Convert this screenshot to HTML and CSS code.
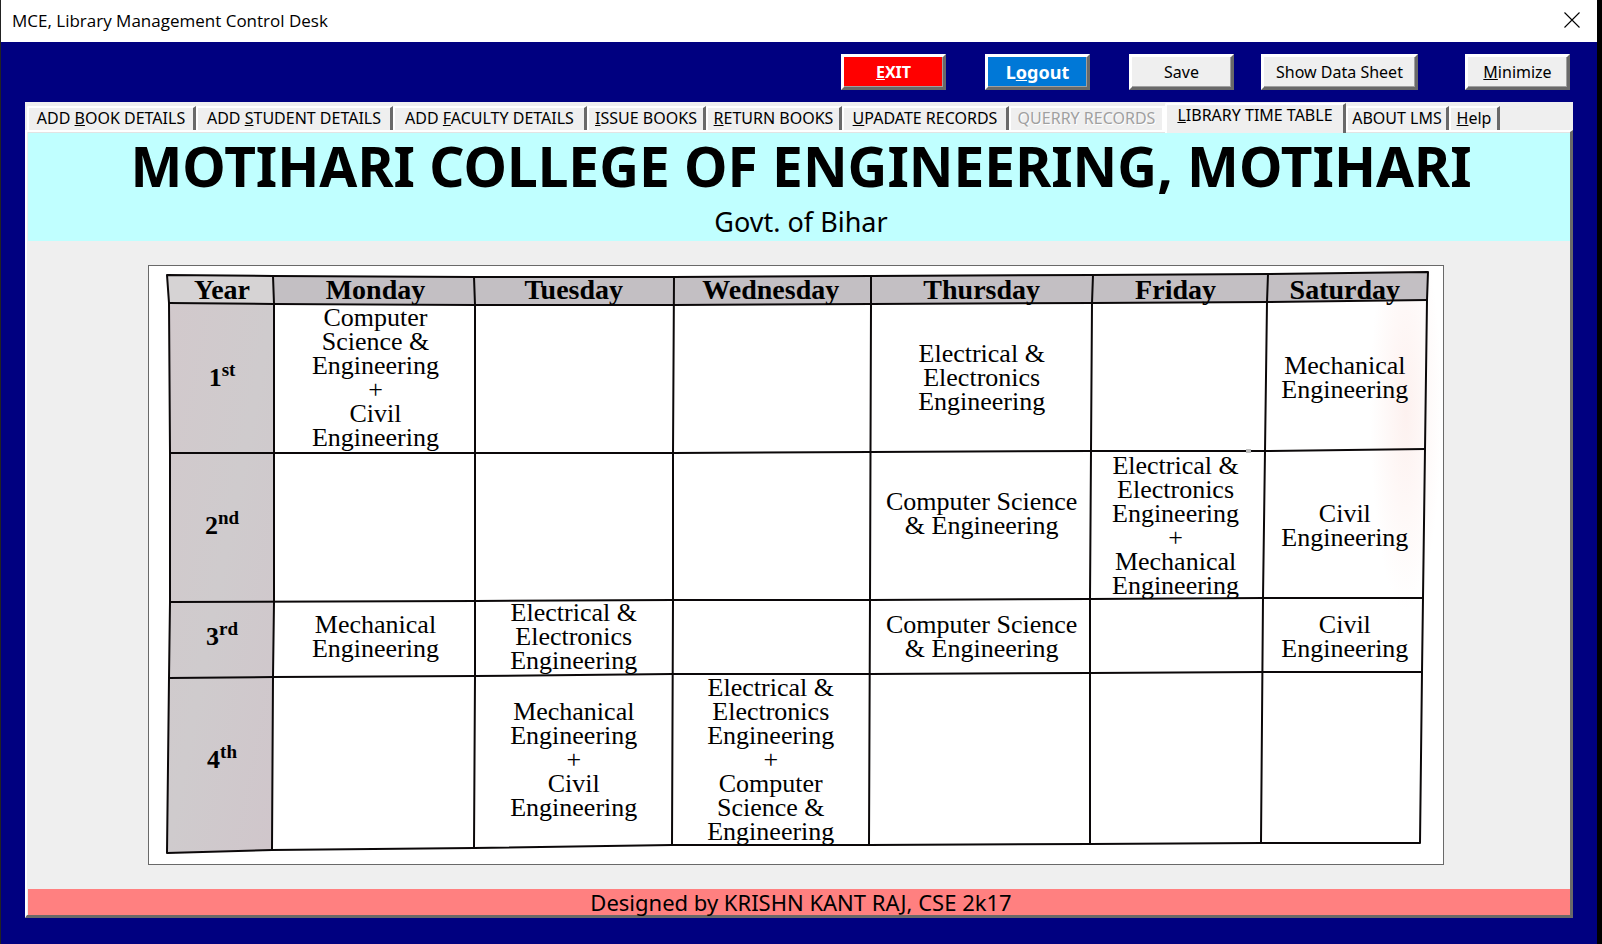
FILE: index.html
```html
<!DOCTYPE html>
<html lang="en">
<head>
<meta charset="utf-8">
<title>MCE, Library Management Control Desk</title>
<link rel="stylesheet" href="styles.css">
</head>
<body>
<div class="window">
  <header class="titlebar">
    <span class="titlebar-text">MCE, Library Management Control Desk</span>
    <button class="close" type="button" aria-label="Close">
      <svg width="16" height="16" viewBox="0 0 16 16"><path d="M0.500 0.500L15.500 15.500M15.500 0.500L0.500 15.500" stroke="#000" stroke-width="1.100" fill="none"/></svg>
    </button>
  </header>

  <main class="desk">
    <div class="toolbar">
      <button class="btn btn-exit" type="button"><u>E</u>XIT</button>
      <button class="btn btn-logout" type="button">L<u>o</u>gout</button>
      <button class="btn" type="button">Save</button>
      <button class="btn btn-wide" type="button">Show Data Sheet</button>
      <button class="btn btn-min" type="button"><u>M</u>inimize</button>
    </div>

    <div class="book">
      <div class="tabs" role="tablist">
        <button class="tab" role="tab" type="button">ADD <u>B</u>OOK DETAILS</button>
        <button class="tab" role="tab" type="button">ADD <u>S</u>TUDENT DETAILS</button>
        <button class="tab" role="tab" type="button">ADD <u>F</u>ACULTY DETAILS</button>
        <button class="tab" role="tab" type="button"><u>I</u>SSUE BOOKS</button>
        <button class="tab" role="tab" type="button"><u>R</u>ETURN BOOKS</button>
        <button class="tab" role="tab" type="button"><u>U</u>PADATE RECORDS</button>
        <button class="tab" role="tab" type="button" disabled>QUERRY RECORDS</button>
        <button class="tab tab-active" role="tab" type="button" aria-selected="true"><u>L</u>IBRARY TIME TABLE</button>
        <button class="tab" role="tab" type="button">ABOUT LMS</button>
        <button class="tab" role="tab" type="button"><u>H</u>elp</button>
      </div>

      <section class="page" role="tabpanel">
        <div class="banner">
          <h1 class="college">MOTIHARI COLLEGE OF ENGINEERING, MOTIHARI</h1>
          <p class="govt">Govt. of Bihar</p>
        </div>

        <div class="sheet-area">
          <div class="sheet">
            <svg class="ruling" viewBox="149 266 1294 598" preserveAspectRatio="none" aria-hidden="true">
              <defs>
                <linearGradient id="yearShade" x1="0" x2="1" y1="0" y2="1">
                  <stop offset="0" stop-color="#d2c9cc"/><stop offset="0.500" stop-color="#cfcbcd"/><stop offset="1" stop-color="#d0c6cb"/>
                </linearGradient>
                <radialGradient id="pinkEdge">
                  <stop offset="0" stop-color="#fdf1ef"/><stop offset="1" stop-color="#fff"/>
                </radialGradient>
              </defs>
              <ellipse cx="1406" cy="410" rx="36" ry="200" fill="url(#pinkEdge)"/>
              <path d="M167 275L474 277L673 277L871 276L1093 275L1268 274L1428 272L1427 300L1267 302L1092 303L871 304L673 305L475 304L169 303Z" fill="#c3bfc3"/>
              <path d="M167 275L273 276L274 304L169 303Z" fill="#d6d3d4"/>
              <path d="M169 303L274 304V602L273 677L272 850L167 853L169 678L170 602V453Z" fill="url(#yearShade)"/>
              <g fill="none" stroke="#0b0809" stroke-width="2" stroke-linejoin="round">
                <path d="M167 275L273 276L474 277L673 277L871 276L1093 275L1268 274L1428 272L1427 300L1425 449L1423 598L1422 672L1420 843L1261 843L1090 844L869 845L672 845L474 848L272 850L167 853L169 678L170 602L170 453L169 303Z"/>
                <path d="M169 303L274 304L475 305L673 305L871 304L1092 303L1267 302L1427 300"/>
                <path d="M170 453L475 453L673 453L870 452L1091 451L1265 451L1425 449"/>
                <path d="M170 602L475 601L673 600L870 600L1090 599L1263 598L1423 598"/>
                <path d="M169 678L274 677L475 676L672 674L870 674L1090 673L1262 672L1422 672"/>
                <path d="M273 276L274 304L274 602L273 677L272 850"/>
                <path d="M474 277L475 305V676L474 848"/>
                <path d="M674 277L673 453L673 600L672 845"/>
                <path d="M871 276L871 304L870 600L869 845"/>
                <path d="M1093 275L1092 303L1091 451L1090 599V844"/>
                <path d="M1268 274L1267 302L1265 451L1263 598L1261 843"/>
              </g>
              <path d="M1246 449h5v4h-5z" fill="#bbb"/>
            </svg>
            <table class="timetable">
              <colgroup><col class="c-year"><col class="c-mon"><col class="c-tue"><col class="c-wed"><col class="c-thu"><col class="c-fri"><col class="c-sat"></colgroup>
              <thead>
                <tr><th scope="col">Year</th><th scope="col">Monday</th><th scope="col">Tuesday</th><th scope="col">Wednesday</th><th scope="col">Thursday</th><th scope="col">Friday</th><th scope="col">Saturday</th></tr>
              </thead>
              <tbody>
                <tr class="r-first">
                  <th scope="row">1<sup>st</sup></th>
                  <td>Computer<br>Science &amp;<br>Engineering<br>+<br>Civil<br>Engineering</td>
                  <td></td><td></td>
                  <td>Electrical &amp;<br>Electronics<br>Engineering</td>
                  <td></td>
                  <td>Mechanical<br>Engineering</td>
                </tr>
                <tr class="r-second">
                  <th scope="row">2<sup>nd</sup></th>
                  <td></td><td></td><td></td>
                  <td class="raised">Computer Science<br>&amp; Engineering</td>
                  <td>Electrical &amp;<br>Electronics<br>Engineering<br>+<br>Mechanical<br>Engineering</td>
                  <td>Civil<br>Engineering</td>
                </tr>
                <tr class="r-third">
                  <th scope="row">3<sup>rd</sup></th>
                  <td>Mechanical<br>Engineering</td>
                  <td>Electrical &amp;<br>Electronics<br>Engineering</td>
                  <td></td>
                  <td>Computer Science<br>&amp; Engineering</td>
                  <td></td>
                  <td>Civil<br>Engineering</td>
                </tr>
                <tr class="r-fourth">
                  <th scope="row">4<sup>th</sup></th>
                  <td></td>
                  <td>Mechanical<br>Engineering<br>+<br>Civil<br>Engineering</td>
                  <td>Electrical &amp;<br>Electronics<br>Engineering<br>+<br>Computer<br>Science &amp;<br>Engineering</td>
                  <td></td><td></td><td></td>
                </tr>
              </tbody>
            </table>
          </div>
        </div>

        <footer class="credit">Designed by KRISHN KANT RAJ, CSE 2k17</footer>
      </section>
    </div>
  </main>
</div>
</body>
</html>
```

FILE: styles.css
```css
* { box-sizing: border-box; }

body {
  margin: 0;
  background: #000;
  font-family: "Noto Sans", "Open Sans", sans-serif;
  color: #000;
}

.window {
  min-height: 100vh;
  display: flex;
  flex-direction: column;
  border-left: 1px solid #222;
  margin-right: 5px;
  background: #000080;
}

.titlebar {
  height: 42px;
  display: flex;
  align-items: center;
  justify-content: space-between;
  padding: 0 17px 2px 11px;
  background: #fff;
}

.titlebar-text { font-family: "Open Sans", "Noto Sans", sans-serif; font-size: 17px; }

.close {
  display: flex;
  padding: 0;
  border: 0;
  background: none;
}

.desk { padding: 12px 24px 26px; }

.toolbar {
  display: flex;
  justify-content: flex-end;
  gap: 39px;
  padding-right: 3px;
  margin-bottom: 12px;
}

.btn {
  width: 105px;
  height: 36px;
  padding: 0;
  border: 3px solid;
  border-color: #fff #696969 #696969 #fff;
  box-shadow: inset -1px -1px #a0a0a0;
  background: #efefef;
  font-family: inherit;
  font-size: 16px;
  color: #000;
}

.btn-exit { background: #f00; color: #fff; font-weight: bold; }
.btn-logout { background: #0078d7; color: #fff; font-weight: bold; font-size: 18px; }
.btn-wide { width: 157px; margin-left: -12px; }
.btn-min { margin-left: 8px; }

.tabs {
  display: grid;
  grid-template-columns: 169fr 197fr 194fr 119fr 136fr 167fr 156fr 181fr 103fr 51fr 73fr;
  align-items: end;
  height: 28px;
  padding-left: 2px;
  background: #efefef;
}

.tab {
  height: 24px;
  padding: 0 0 2px;
  border: solid;
  border-width: 2px 3px 0 2px;
  border-color: #fff #696969 #fff #fff;
  border-radius: 2px 0 0 0;
  background: #efefef;
  font-family: inherit;
  font-size: 16px;
  line-height: 20px;
  white-space: nowrap;
  color: #000;
}

.tab:disabled { color: #a0a0a0; text-shadow: 1px 1px #fff; border-right-color: #fff; }

.tab-active {
  z-index: 1;
  height: 30px;
  margin-bottom: -3px;
  padding-bottom: 8px;
}

.page {
  padding-left: 1px;
  border: solid;
  border-width: 2px 3px 3px 2px;
  border-color: #fff #696969 #696969 #fff;
  background: #efefef;
}

.banner {
  height: 109px;
  padding-left: 4px;
  border-top: 1px solid #e3e3e3;
  background: #c0ffff;
  text-align: center;
}

.college { margin: 0; font-size: 55px; line-height: 66px; white-space: nowrap; }
.govt { margin: 0; font-size: 27px; line-height: 46px; }

.sheet-area { padding: 24px 126px 24px 120px; }

.sheet {
  position: relative;
  padding: 10px 11px 19px 20px;
  border: 1px solid #696969;
  background: #fff;
}

.ruling { position: absolute; inset: 0; width: 100%; height: 100%; }

.timetable {
  position: relative;
  width: 100%;
  table-layout: fixed;
  border-collapse: collapse;
  font-family: "Liberation Serif", "Times New Roman", serif;
  font-size: 26px;
  line-height: 24px;
  text-align: center;
}

.timetable th, .timetable td { padding: 0; vertical-align: middle; white-space: nowrap; }
.timetable thead th { height: 27px; font-size: 28px; line-height: 27px; }
.timetable td.raised { padding-bottom: 24px; }
.timetable sup { font-size: 19px; line-height: 0; }

.c-year { width: 8.4%; }
.c-mon { width: 15.9%; }
.c-tue { width: 15.5%; }
.c-wed { width: 15.7%; }
.c-thu { width: 17.7%; }
.c-fri { width: 13%; }
.c-sat { width: 13.8%; }
.r-first { height: 149px; }
.r-second { height: 147px; }
.r-third { height: 75px; }
.r-fourth { height: 171px; }

.credit {
  height: 26px;
  padding-left: 4px;
  background: #ff8080;
  font-size: 22px;
  line-height: 26px;
  text-align: center;
}
```
